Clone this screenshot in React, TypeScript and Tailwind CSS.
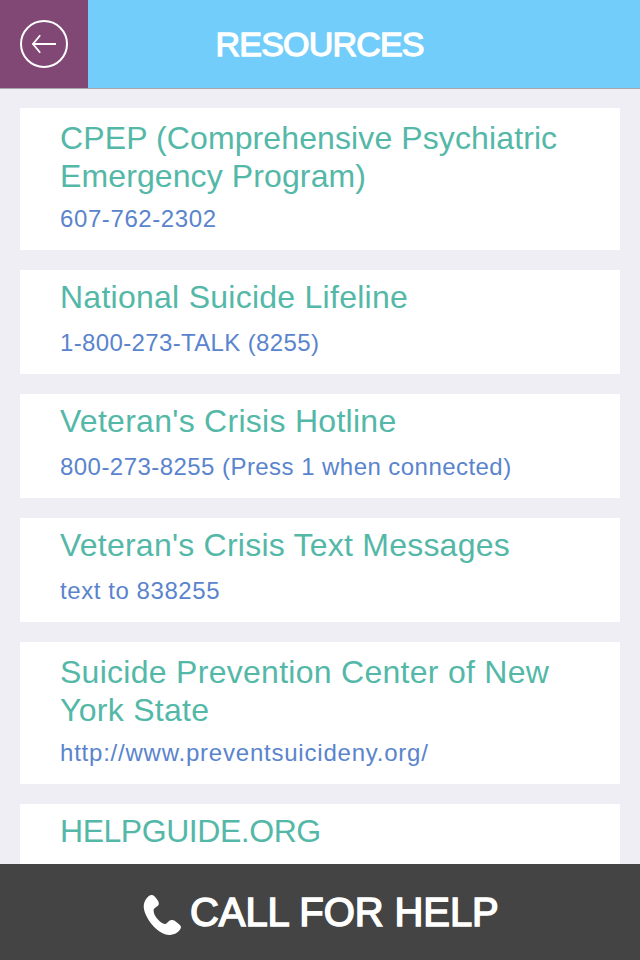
import React from 'react';

interface Resource {
  title: string[];
  contact?: string;
  titleTracking: string;
  contactTracking?: string;
}

const resources: Resource[] = [
  {
    title: ['CPEP (Comprehensive Psychiatric', 'Emergency Program)'],
    contact: '607-762-2302',
    titleTracking: 'tracking-[0.11px]',
    contactTracking: 'tracking-[0.6px]',
  },
  {
    title: ['National Suicide Lifeline'],
    contact: '1-800-273-TALK (8255)',
    titleTracking: 'tracking-[0.26px]',
    contactTracking: 'tracking-[0.36px]',
  },
  {
    title: ["Veteran's Crisis Hotline"],
    contact: '800-273-8255 (Press 1 when connected)',
    titleTracking: 'tracking-[0.28px]',
    contactTracking: 'tracking-[0.45px]',
  },
  {
    title: ["Veteran's Crisis Text Messages"],
    contact: 'text to 838255',
    titleTracking: 'tracking-[0.23px]',
    contactTracking: 'tracking-[0.57px]',
  },
  {
    title: ['Suicide Prevention Center of New', 'York State'],
    contact: 'http://www.preventsuicideny.org/',
    titleTracking: 'tracking-[0.28px]',
    contactTracking: 'tracking-[0.78px]',
  },
  {
    title: ['HELPGUIDE.ORG'],
    titleTracking: 'tracking-[-0.46px]',
  },
];

const ResourceCard: React.FC<{ resource: Resource }> = ({ resource }) => {
  const wraps = resource.title.length > 1;

  return (
    <li className={`shrink-0 bg-white px-10 ${wraps ? 'h-[142px] pt-[11px]' : 'h-[104px] pt-2'}`}>
      <h2 className={`text-[32px] leading-[38px] whitespace-nowrap text-[#54b8a8] ${resource.titleTracking}`}>
        {resource.title.map((line) => (
          <span key={line} className="block">{line}</span>
        ))}
      </h2>
      {resource.contact && (
        <p
          className={`text-2xl leading-7 whitespace-nowrap text-[#5a84cd] ${resource.contactTracking} ${wraps ? 'mt-2.5' : 'mt-[13px]'}`}
        >
          {resource.contact}
        </p>
      )}
    </li>
  );
};

const BackIcon = () => (
  <svg className="size-12" viewBox="0 0 48 48" fill="none" stroke="white">
    <circle cx="24" cy="24" r="23" strokeWidth="2" />
    <path d="M12.5 24H36" strokeWidth="2" />
    <path d="M20.2 15.2L13 24L20.2 32.8" strokeWidth="1.8" />
  </svg>
);

const PhoneIcon = () => (
  <svg className="h-10 w-[38px] shrink-0" viewBox="0 0 38 40" fill="white">
    <path d="M9.2 .1C10.9.3 12.5 2.4 13.9 4.3C15.1 6 16.2 7.6 15.7 9.4C15.1 11.6 10.7 12.3 10.6 15.5C10.5 18.5 13 22.6 15.4 25.1C17.4 27.2 20.2 29.2 22.2 28.9C24.6 28.5 25.3 25 28.8 24.9C30.9 24.8 32.5 26.2 34 27.5C35.8 29.1 38 30.6 38 32.1C38 33.8 36 36.4 33.8 37.8C31.5 39.3 28.8 40 26 39.9C17.4 39.6 8.7 30.7 4.7 23.5C2.3 19.2.7 15 .7 11.5C.7 8.9 1.5 6.4 2.8 4.4C4.4 2.1 7-.2 9.2 .1Z" />
  </svg>
);

export default function App() {
  return (
    <div className="flex h-[960px] w-[640px] flex-col overflow-hidden bg-[#efeef4] font-['Liberation_Sans',sans-serif]">
      <header className="flex h-[89px] shrink-0 border-b border-[#a5a5aa] bg-[#72cdfa]">
        <button className="flex w-[88px] items-center justify-center bg-[#814775]" aria-label="Back">
          <BackIcon />
        </button>
        <h1 className="flex-1 pt-[25px] pl-[127.5px] text-[34px] leading-[38px] tracking-[-0.8px] whitespace-nowrap text-white [-webkit-text-stroke:1.3px_white]">
          RESOURCES
        </h1>
      </header>

      <ul className="flex min-h-0 flex-1 flex-col gap-5 overflow-hidden px-5 pt-[19px]">
        {resources.map((resource) => (
          <ResourceCard key={resource.title[0]} resource={resource} />
        ))}
      </ul>

      <footer className="h-24 shrink-0 bg-[#444444]">
        <button className="flex h-full w-full items-start pl-[143px] text-white">
          <span className="pt-[31px]">
            <PhoneIcon />
          </span>
          <span className="pt-[25px] pl-[9px] text-[40px] leading-[46px] tracking-[-0.08px] whitespace-nowrap [-webkit-text-stroke:1.5px_white]">
            CALL FOR HELP
          </span>
        </button>
      </footer>
    </div>
  );
}
